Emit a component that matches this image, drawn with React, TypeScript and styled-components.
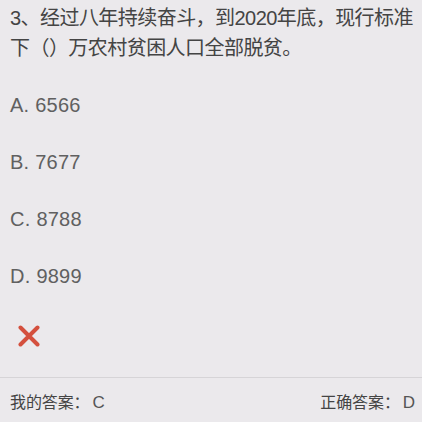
import React from "react";
import styled, { createGlobalStyle } from "styled-components";

const Global = createGlobalStyle`
  html, body { margin: 0; padding: 0; background: #ebe9ec; }
  body { font-family: "Liberation Sans", "Noto Sans CJK SC", sans-serif; }
`;

const Page = styled.div`
  width: 422px;
  height: 422px;
  display: flex;
  flex-direction: column;
  background: #ebe9ec;
  overflow: hidden;
`;

const Body = styled.div`
  flex: 1;
  padding: 3px 0 0 10px;
  display: flex;
  flex-direction: column;
`;

const Question = styled.div`
  font-size: 20px;
  line-height: 30px;
  color: #444;
  margin-bottom: 14px;
  letter-spacing: -0.55px;
`;

const QLine = styled.div`
  white-space: nowrap;
`;

const Option = styled.div`
  height: 57px;
  display: flex;
  align-items: center;
  font-size: 20px;
  color: #606060;
  letter-spacing: 0.2px;
`;

const Letter = styled.span`
  margin-right: 6px;
`;

const Mark = styled.div`
  margin-top: 20px;
  margin-left: 8px;
  width: 22px;
  height: 22px;
`;

const Footer = styled.div`
  height: 42px;
  border-top: 1px solid #d6d4d7;
  display: flex;
  align-items: center;
  justify-content: space-between;
  padding: 2px 7px 0 10px;
  font-size: 16px;
  color: #444;
`;

const Answer = styled.span`
  letter-spacing: -0.1px;
`;

const Code = styled.span`
  font-size: 17px;
  margin-left: 3px;
  color: #555;
`;

const options = [
  ["A.", "6566"],
  ["B.", "7677"],
  ["C.", "8788"],
  ["D.", "9899"],
];

export default function App() {
  return (
    <Page>
      <Global />
      <Body>
        <Question>
          <QLine>3、经过八年持续奋斗，到2020年底，现行标准</QLine>
          <QLine>下（）万农村贫困人口全部脱贫。</QLine>
        </Question>
        {options.map(([l, v]) => (
          <Option key={l}>
            <Letter>{l}</Letter>
            {v}
          </Option>
        ))}
        <Mark>
          <svg width="22" height="22" viewBox="0 0 22 22">
            <path d="M2.5 2.5 L19.5 19.5 M19.5 2.5 L2.5 19.5" stroke="#d4503e" strokeWidth="4" strokeLinecap="round" />
          </svg>
        </Mark>
      </Body>
      <Footer>
        <Answer>我的答案：<Code>C</Code></Answer>
        <Answer>正确答案：<Code>D</Code></Answer>
      </Footer>
    </Page>
  );
}
